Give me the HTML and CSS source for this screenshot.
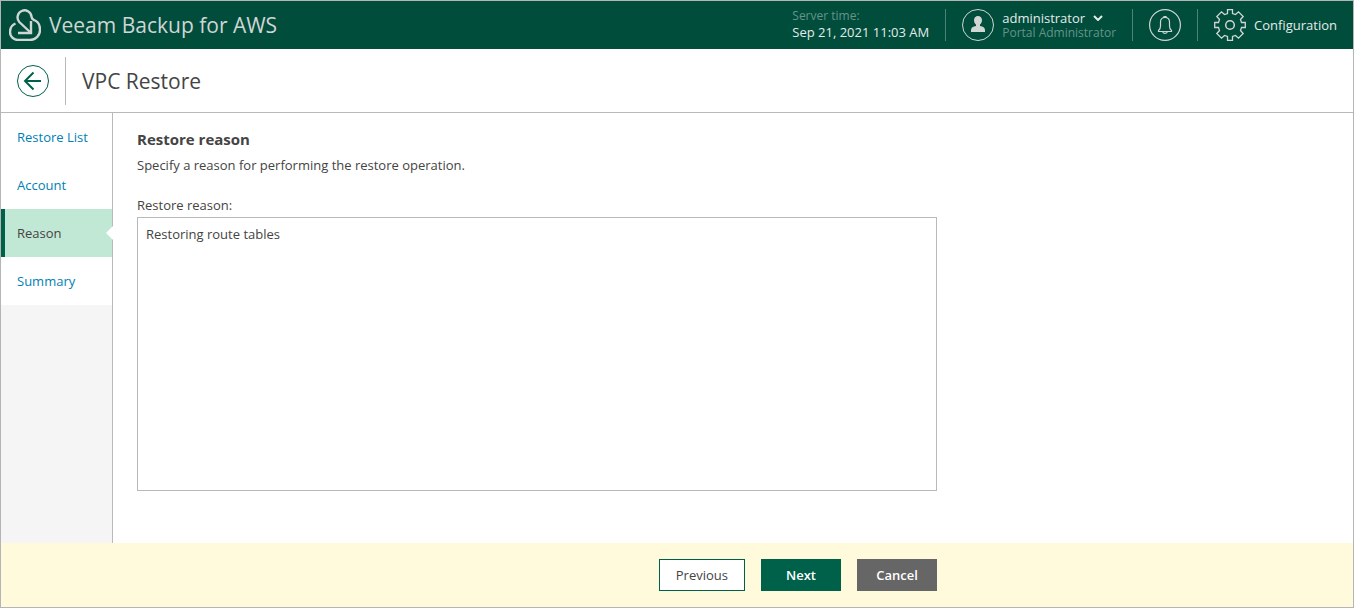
FILE: index.html
```html
<!DOCTYPE html>
<html lang="en">
<head>
  <meta charset="UTF-8" />
  <meta name="viewport" content="width=device-width, initial-scale=1.0"/>
  <title>Veeam Backup for AWS</title>
  <link rel="stylesheet" href="styles.css">
</head>
<body>
  <div class="app">
    <header class="topbar">
      <div class="brand">
        <svg class="icon" width="32" height="32" viewBox="0 0 32 32" fill="none" stroke="currentColor" stroke-width="2.4">
          <path d="M22 24 L10.3 13 A7 7 0 1 1 22.5 7.5 C22.7 9.5 23.5 10.5 25 11 C29 12.5 31 16 31 20.5 A10 10 0 0 1 21 31 H9 A8 8 0 0 1 1 23 C1 19 3 16 6.5 14.5"/>
          <path d="M22 12 V24 H9"/>
        </svg>
        <span class="brand-name">Veeam Backup for AWS</span>
      </div>

      <div class="server-time">
        <span class="muted">Server time:</span>
        <span>Sep 21, 2021 11:03 AM</span>
      </div>

      <button class="topbar-item user" type="button">
        <svg class="icon" width="32" height="32" viewBox="0 0 32 32">
          <circle cx="16" cy="16" r="15.5" fill="none" stroke="currentColor"/>
          <path fill="currentColor" d="M16 7 C18.4 7 20 8.7 20 11.2 C20 13 19.2 14.6 18 15.6 V17 C21 17.5 23 18.6 23 21 V23 H9 V21 C9 18.6 11 17.5 14 17 V15.6 C12.8 14.6 12 13 12 11.2 C12 8.7 13.6 7 16 7 Z"/>
        </svg>
        <span class="user-text">
          <span class="user-name">
            administrator
            <svg width="10" height="6" viewBox="0 0 10 6" fill="none" stroke="currentColor" stroke-width="2"><path d="M1 1 L5 5 L9 1"/></svg>
          </span>
          <span class="muted">Portal Administrator</span>
        </span>
      </button>

      <button class="topbar-item" type="button" aria-label="Notifications">
        <svg class="icon" width="32" height="32" viewBox="0 0 32 32" fill="none" stroke="currentColor" stroke-width="1.2">
          <circle cx="16" cy="16" r="15.4"/>
          <path d="M15 8.5 V7.5 H17 V8.5 M9.5 21.5 C11 20.5 11.5 19 11.5 17 V13 C11.5 10.2 13.2 8.5 16 8.5 C18.8 8.5 20.5 10.2 20.5 13 V17 C20.5 19 21 20.5 22.5 21.5 V22.5 H9.5 Z M13.5 22.5 C14 25 18 25 18.5 22.5"/>
        </svg>
      </button>

      <button class="topbar-item config" type="button">
        <svg class="icon" width="32" height="32" viewBox="0 0 32 32" fill="none" stroke="currentColor" stroke-width="1.3">
          <path d="M13.5 0.7 H18.5 V4.5 L21.5 5.5 L24.5 2.8 L29.2 7.5 L26.5 10.5 L27.5 13.5 H31.3 V18.5 H27.5 L26.5 21.5 L29.2 24.5 L24.5 29.2 L21.5 26.5 L18.5 27.5 V31.3 H13.5 V27.5 L10.5 26.5 L7.5 29.2 L2.8 24.5 L5.5 21.5 L4.5 18.5 H0.7 V13.5 H4.5 L5.5 10.5 L2.8 7.5 L7.5 2.8 L10.5 5.5 L13.5 4.5 Z"/>
          <circle cx="16" cy="16" r="4.3" stroke-width="1.5"/>
        </svg>
        <span>Configuration</span>
      </button>
    </header>

    <div class="page-head">
      <button class="back" type="button" aria-label="Back">
        <svg width="32" height="32" viewBox="0 0 32 32" fill="none" stroke="currentColor">
          <circle cx="16" cy="16" r="15.5"/>
          <path d="M24 16 H8.5 M16.5 7.5 L8 16 L16.5 24.5" stroke-width="2"/>
        </svg>
      </button>
      <h1>VPC Restore</h1>
    </div>

    <div class="main">
      <nav class="steps">
        <a class="step" href="#">Restore List</a>
        <a class="step" href="#">Account</a>
        <a class="step active" href="#" aria-current="step">Reason</a>
        <a class="step" href="#">Summary</a>
      </nav>

      <main class="content">
        <h2>Restore reason</h2>
        <p>Specify a reason for performing the restore operation.</p>
        <label for="reason">Restore reason:</label>
        <textarea id="reason" spellcheck="false">Restoring route tables</textarea>
      </main>
    </div>

    <footer class="footer">
      <div class="actions">
        <button class="btn" type="button">Previous</button>
        <button class="btn primary" type="button">Next</button>
        <button class="btn cancel" type="button">Cancel</button>
      </div>
    </footer>
  </div>
</body>
</html>
```
FILE: styles.css
```css
* {
  box-sizing: border-box;
}

body {
  margin: 0;
  font-family: "Open Sans", "Noto Sans", sans-serif;
  font-size: 13px;
  line-height: 16px;
  color: #444;
  background: #fff;
}

button {
  font: inherit;
  cursor: pointer;
}

svg {
  flex: none;
}

.app {
  display: flex;
  flex-direction: column;
  min-height: 100vh;
  border: 1px solid #b5b5b5;
}

/* top bar */
.topbar {
  display: flex;
  align-items: center;
  height: 48px;
  padding-left: 8px;
  background: #004d3c;
  color: #e4ebe9;
}

.brand {
  display: flex;
  align-items: center;
  gap: 8px;
  margin-right: auto;
}

.brand-name {
  font-size: 21px;
  line-height: 32px;
  color: #d0d6d4;
}

.icon {
  color: #d0d6d4;
}

.muted {
  font-size: 12px;
  color: #669488;
}

.server-time {
  display: flex;
  flex-direction: column;
  padding: 0 16px 2px 0;
}

.topbar-item {
  display: flex;
  align-items: center;
  gap: 8px;
  height: 32px;
  padding: 0 16px;
  border: none;
  border-left: 1px solid #4d8277;
  background: none;
  color: inherit;
  text-align: left;
}

.user-text {
  display: flex;
  flex-direction: column;
}

.user-name {
  display: flex;
  align-items: center;
  gap: 8px;
}

.user-text .muted {
  line-height: 14px;
}

/* page title */
.page-head {
  display: flex;
  align-items: center;
  gap: 16px;
  height: 64px;
  padding-left: 16px;
  border-bottom: 1px solid #b9b9b9;
}

.back {
  display: flex;
  padding: 0;
  border: none;
  background: none;
  color: #00614b;
}

h1 {
  margin: 0;
  padding-left: 16px;
  border-left: 1px solid #b9b9b9;
  font-size: 21px;
  font-weight: 400;
  line-height: 48px;
}

/* wizard body */
.main {
  display: flex;
  flex: 1;
}

.steps {
  flex: none;
  width: 112px;
  border-right: 1px solid #b9b9b9;
  background: #f5f5f5;
}

.step {
  display: block;
  padding-left: 16px;
  line-height: 48px;
  background: #fff;
  color: #007fb5;
  text-decoration: none;
}

.step.active {
  position: relative;
  padding-left: 12px;
  border-left: 4px solid #00614b;
  background: #c1e8d5;
  color: #444;
}

/* notch pointing at the current step */
.step.active::after {
  content: "";
  position: absolute;
  top: 17px;
  right: -1px;
  width: 7px;
  height: 14px;
  background: #fff;
  clip-path: polygon(100% 0, 100% 100%, 0 50%);
}

.content {
  flex: 1;
  padding: 16px 24px 52px;
}

h2 {
  margin: 0 0 8px;
  font-size: 15px;
  font-weight: 700;
  line-height: 20px;
}

p {
  margin: 0 0 24px;
}

label {
  display: block;
  margin-bottom: 4px;
}

textarea {
  display: block;
  width: 100%;
  max-width: 800px;
  height: 274px;
  padding: 8px;
  border: 1px solid #b9b9b9;
  font: inherit;
  color: inherit;
  resize: none;
  outline: none;
}

/* footer */
.footer {
  padding: 16px 24px 16px 136px;
  background: #fffadb;
}

.actions {
  display: flex;
  justify-content: flex-end;
  gap: 16px;
  max-width: 800px;
}

.btn {
  min-width: 80px;
  height: 32px;
  padding: 0 16px;
  border: 1px solid #00614b;
  background: #fff;
  color: #444;
}

.btn.primary {
  background: #00614b;
  color: #fff;
  font-weight: 600;
}

.btn.cancel {
  border-color: #666;
  background: #666;
  color: #fff;
  font-weight: 600;
}
```
